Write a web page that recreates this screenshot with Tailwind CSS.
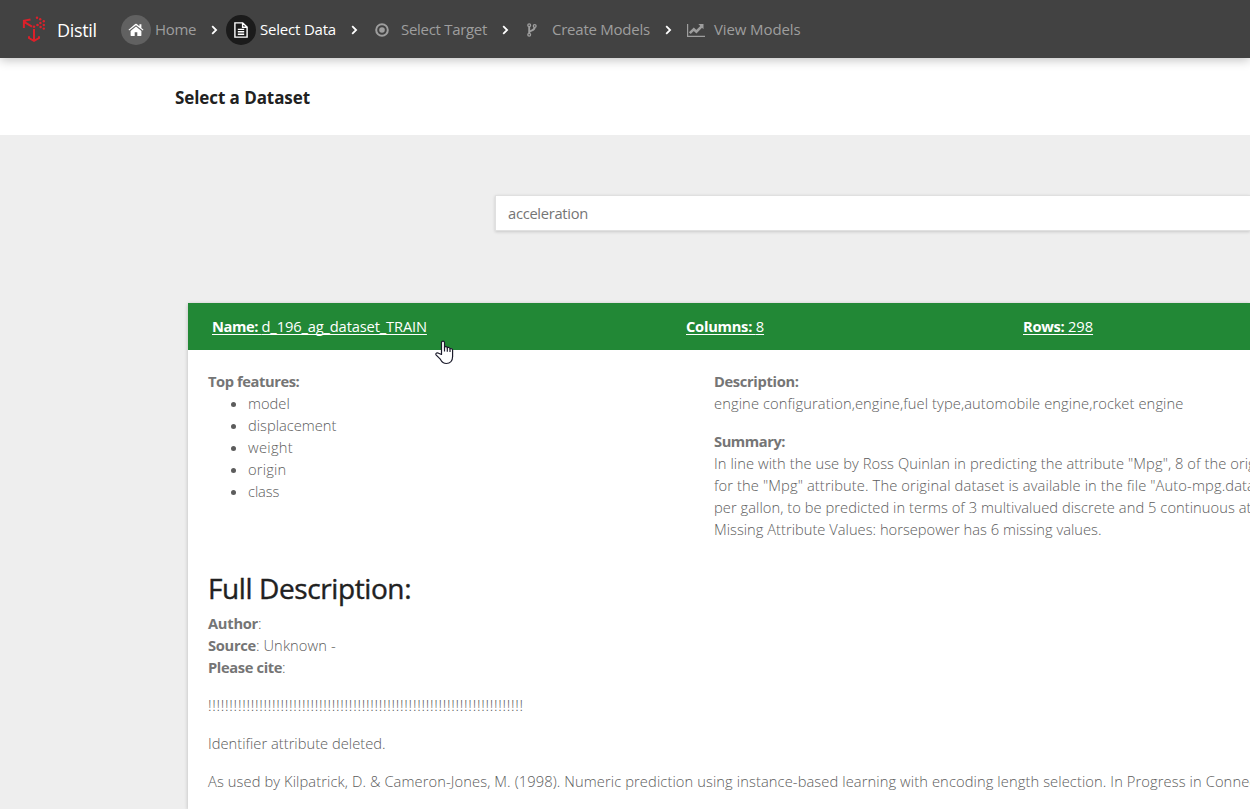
<!DOCTYPE html>
<html lang="en">
<head>
<meta charset="utf-8">
<title>Distil</title>
<script src="https://cdn.jsdelivr.net/npm/@tailwindcss/browser@4"></script>
</head>
<body class="w-[1250px] h-[809px] overflow-hidden bg-[#eeeeee] font-['Open_Sans','Noto_Sans',sans-serif] text-[14.7px] leading-[22px] text-[#757575]">
<nav class="relative z-10 flex h-[58px] items-center bg-[#424242] pt-[2px] pl-[22px] text-[15px] text-[#9e9e9e] whitespace-nowrap shadow-[0_2px_10px_rgba(0,0,0,0.25)]">
  <svg class="mt-[-2px] h-[26px] w-[25px] shrink-0" viewBox="0 0 25 26" fill="none" stroke="#dc202a" stroke-width="2">
    <path d="M2.5 6.2 10 10.6M1.9 12V4.8L8.5 3.4M12 13v11M7 20.2V22l5 2.8 5-2.8v-1.8"/>
    <g fill="#dc202a" stroke="none">
      <circle cx="12" cy="10.8" r="1.3"/><circle cx="15.5" cy="9" r="1.3"/><circle cx="18.4" cy="7" r="1.2"/><circle cx="18.2" cy="3.2" r="1.2"/><circle cx="15" cy="1.7" r="1.2"/><circle cx="21.8" cy="5.2" r="1.2"/><circle cx="21.8" cy="9" r="1.2"/><circle cx="21.8" cy="12.6" r="1.2"/><circle cx="18.6" cy="11" r="1.2"/>
    </g>
  </svg>
  <span class="ml-[10px] w-[40px] pb-px text-[18px] tracking-[-0.35px] text-white">Distil</span>
  <span class="ml-[24px] flex size-[30px] items-center justify-center rounded-full bg-[#616161]">
    <svg class="h-[14px] w-[16px]" viewBox="0 0 16 14" fill="#fff"><path d="M8 3.6 2.6 8v4.6c0 .3.2.5.5.5h3.6V9.3h2.6v3.8h3.6c.3 0 .5-.2.5-.5V8z"/><path d="M15.5 6.8 13.4 5V1.3h-2v2L8.8 1.1a1.2 1.2 0 0 0-1.6 0L.5 6.8l.7.8L8 2.2l6.8 5.4z"/></svg>
  </span>
  <span class="ml-1 w-[41px] pb-[2px] tracking-[-0.35px]">Home</span>
  <svg class="ml-[15px] h-[10px] w-[7px]" viewBox="0 0 7 10" fill="none" stroke="#fff" stroke-width="1.8"><path d="m1.2 1.2 3.9 3.8-3.9 3.8"/></svg>
  <span class="ml-[8px] flex size-[30px] items-center justify-center rounded-full bg-[#1b1b1b]">
    <svg class="h-[16px] w-[14px]" viewBox="0 0 14 16" fill="none" stroke="#fff" stroke-width="1.4"><path d="M.9.9h7.8l4.4 4.2v10H.9zM8.6.9v4.4h4.5M3.8 7.4h6.4M3.8 9.8h6.4M3.8 12.2h6.4"/></svg>
  </span>
  <span class="ml-1 w-[76px] pb-[2px] tracking-[-0.2px] text-white">Select Data</span>
  <svg class="ml-[15px] h-[10px] w-[7px]" viewBox="0 0 7 10" fill="none" stroke="#fff" stroke-width="1.8"><path d="m1.2 1.2 3.9 3.8-3.9 3.8"/></svg>
  <svg class="ml-[17px] size-[14px]" viewBox="0 0 14 14" fill="none" stroke="#9e9e9e"><circle cx="7" cy="7" r="5.8" stroke-width="2"/><circle cx="7" cy="7" r="2.8" fill="#9e9e9e" stroke="none"/></svg>
  <span class="ml-[12px] w-[86px] pb-[2px] tracking-[-0.3px]">Select Target</span>
  <svg class="ml-[15px] h-[10px] w-[7px]" viewBox="0 0 7 10" fill="none" stroke="#fff" stroke-width="1.8"><path d="m1.2 1.2 3.9 3.8-3.9 3.8"/></svg>
  <svg class="ml-[18px] h-[14px] w-[10px]" viewBox="0 0 10 14" fill="none" stroke="#9e9e9e"><circle cx="2.2" cy="2.2" r="1.4" stroke-width="1.3"/><circle cx="2.2" cy="11.7" r="1.4" stroke-width="1.3"/><circle cx="7.7" cy="3" r="1.4" stroke-width="1.3"/><path d="M2.2 3.5v7M7.7 4.3c0 4-5.5 2.6-5.5 5.4" stroke-width="1.9"/></svg>
  <span class="ml-[15px] w-[98px] pb-[2px] tracking-[-0.24px]">Create Models</span>
  <svg class="ml-[15px] h-[10px] w-[7px]" viewBox="0 0 7 10" fill="none" stroke="#fff" stroke-width="1.8"><path d="m1.2 1.2 3.9 3.8-3.9 3.8"/></svg>
  <svg class="ml-[15px] h-[14px] w-[18px]" viewBox="0 0 18 14" fill="none" stroke="#9e9e9e"><path d="M.6 1v12.4H18" stroke-width="1.2"/><path d="m2.8 10.2 4-4 2.6 2.5L14.4 3.6" stroke-width="2.6"/><path d="M11.3 1h5.2v5.2z" fill="#9e9e9e" stroke="none"/></svg>
  <span class="ml-[9px] pb-[2px] tracking-[-0.11px]">View Models</span>
</nav>
<header class="flex h-[77px] items-center bg-white pl-[175px] pt-[3px]">
  <h1 class="text-[17px] font-bold tracking-[-0.08px] text-[#212121]">Select a Dataset</h1>
</header>
<main>
  <div class="ml-[495px] mt-[60px] flex h-[36px] w-[755px] items-center border border-r-0 border-[#e0e0e0] bg-white pb-px pl-[12px] tracking-[-0.28px] shadow-[0_1px_3px_rgba(0,0,0,0.16)]">acceleration</div>
  <article class="relative ml-[188px] mt-[72px] h-[506px] w-[1062px] bg-white shadow-[0_1px_4px_rgba(0,0,0,0.22)]">
    <div class="flex h-[47px] items-center bg-[#228836] pb-[2px] text-white whitespace-nowrap">
      <a class="ml-6 w-[474px] shrink-0"><span class="underline decoration-1 underline-offset-[2px] [text-decoration-skip-ink:none]"><b class="font-bold tracking-[-0.4px]">Name: </b><span class="tracking-[-0.15px]">d_196_ag_dataset_TRAIN</span></span></a>
      <a class="w-[337px] shrink-0"><span class="underline decoration-1 underline-offset-[2px] [text-decoration-skip-ink:none]"><b class="font-bold tracking-[-0.26px]">Columns: </b>8</span></a>
      <a><span class="underline decoration-1 underline-offset-[2px] [text-decoration-skip-ink:none]"><b class="font-bold tracking-[-0.3px]">Rows: </b><span>298</span></span></a>
    </div>
    <div class="flex h-[210px] overflow-hidden pl-5 pt-[20px] font-light text-[#5c5c5c]">
      <section class="w-[506px] shrink-0">
        <b class="font-bold tracking-[-0.42px] text-[#757575]">Top features:</b>
        <ul class="list-disc pl-[40px]">
          <li>model</li><li>displacement</li><li class="tracking-[0.3px]">weight</li><li class="tracking-[0.2px]">origin</li><li class="tracking-[-0.1px]">class</li>
        </ul>
      </section>
      <section class="whitespace-nowrap">
        <b class="block font-bold tracking-[-0.34px] text-[#757575]">Description:</b>
        <p class="mb-4 tracking-[0.105px]">engine configuration,engine,fuel type,automobile engine,rocket engine</p>
        <b class="block font-bold tracking-[-0.45px] text-[#757575]">Summary:</b>
        <p class="tracking-[0.075px]">In line with the use by Ross Quinlan in predicting the attribute "Mpg", 8 of the original</p>
        <p class="tracking-[0.12px]">for the "Mpg" attribute. The original dataset is available in the file "Auto-mpg.data.</p>
        <p class="tracking-[0.05px]">per gallon, to be predicted in terms of 3 multivalued discrete and 5 continuous attributes</p>
        <p class="tracking-[0.015px]">Missing Attribute Values: horsepower has 6 missing values.</p>
      </section>
    </div>
    <section class="h-[249px] overflow-hidden pl-5 pt-[11px] font-light text-[#5c5c5c] whitespace-nowrap">
      <h2 class="mb-[7px] text-[28px] leading-[34px] font-normal tracking-[-0.4px] text-[#212121] [-webkit-text-stroke:0.4px_#212121]">Full Description:</h2>
      <p><b class="font-bold tracking-[-0.26px] text-[#757575]">Author</b>:</p>
      <p class="tracking-[0.1px]"><b class="font-bold tracking-[-0.3px] text-[#757575]">Source</b>: Unknown -</p>
      <p><b class="font-bold tracking-[-0.37px] text-[#757575]">Please cite</b>:</p>
      <p class="mt-4 tracking-[0.74px]">!!!!!!!!!!!!!!!!!!!!!!!!!!!!!!!!!!!!!!!!!!!!!!!!!!!!!!!!!!!!!!!!!!!!!!!!!!</p>
      <p class="mt-4 tracking-[0.02px]">Identifier attribute deleted.</p>
      <p class="mt-4 tracking-[0.1px]">As used by Kilpatrick, D. &amp; Cameron-Jones, M. (1998). Numeric prediction using instance-based learning with encoding length selection. In Progress in Connectionist</p>
    </section>
    <svg class="absolute left-[247px] top-[37px] h-[25px] w-[19px]" viewBox="0 0 19 25" fill="#fff" stroke="#1b1b2b" stroke-width="1.2" stroke-linejoin="round"><path d="M6.5 14.5V2.8C6.5.5 9.5.5 9.5 2.8v4.4c.6-1 2.7-.7 2.8.7.7-.8 2.6-.5 2.7 1 .8-.7 2.6-.2 2.6 1.4v6.3c0 4.2-2.5 6.9-6.2 6.9-3.5 0-4.7-1.7-6.1-4.3L1 14.8c-.6-1.5 1.3-2.7 2.6-1.5z"/><path d="M9.5 7v4.6M12.3 8v3.8M15 9v3"/></svg>
  </article>
</main>
</body>
</html>
